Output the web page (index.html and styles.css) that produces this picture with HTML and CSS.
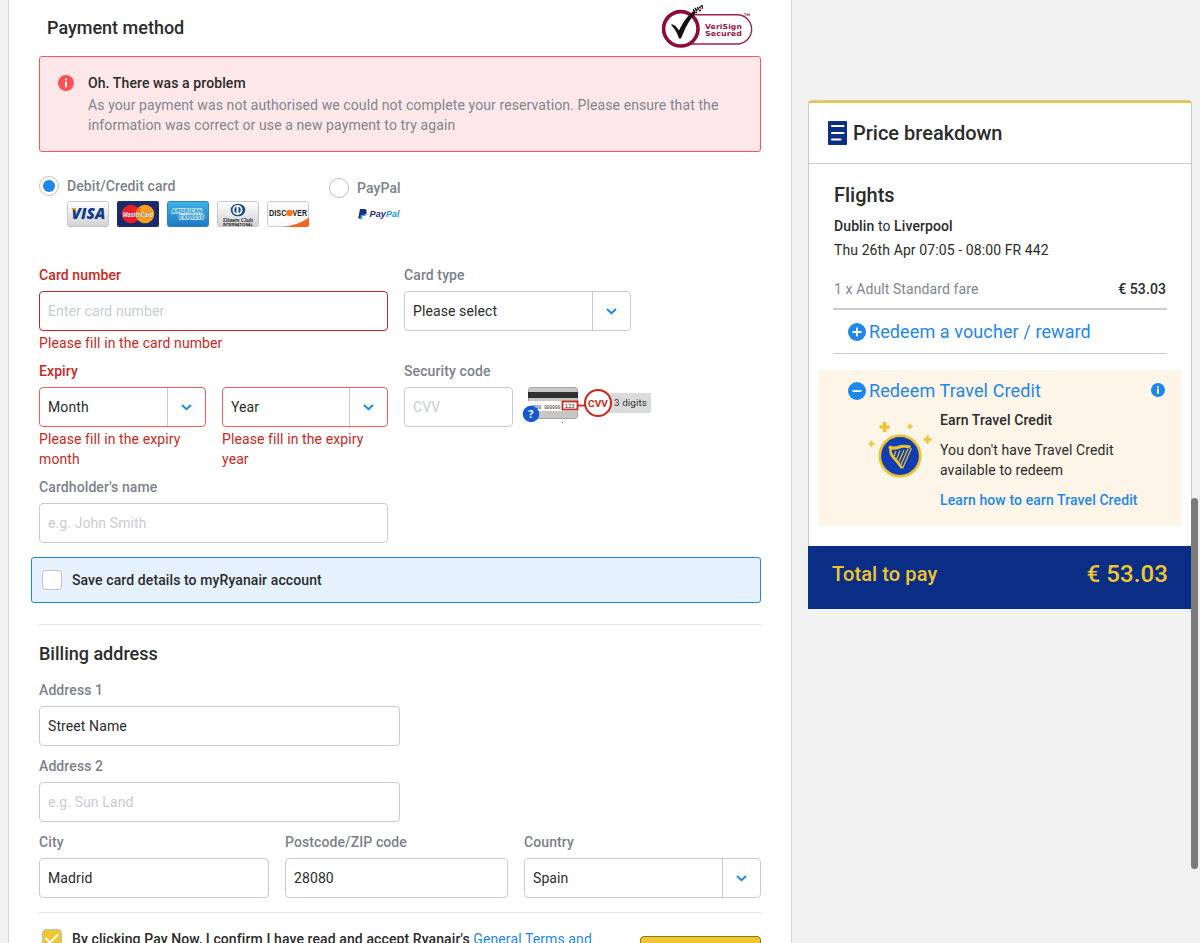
FILE: index.html
```html
<!DOCTYPE html>
<html lang="en">
<head>
<meta charset="utf-8">
<title>Payment</title>
<link rel="stylesheet" href="styles.css">
</head>
<body>
<div class="page">
<main class="panel">
  <header class="panel-head">
    <h2>Payment method</h2>
    <svg class="verisign" width="92" height="44" viewBox="0 0 92 44">
      <path d="M30 10.7H76a14.3 14.3 0 0 1 0 29.3H30" fill="#fff" stroke="#a02048" stroke-width="1.4"/>
      <circle cx="19.8" cy="24.8" r="17.2" fill="#fff" stroke="#8f0b37" stroke-width="3.6"/>
      <path d="M10.5 20c3 1 5.500 3 7.500 6.500C22 18 27 11 33.500 6.500l1.500 2C29 15 24 24 20 34.500h-2C16 28 13 24 10.500 21.500z" fill="#111"/>
      <path d="M32 5.500l2 2M34 4l2 3M36.500 3l1 3M38.500 2.500l1 2M41 1v2M35 9l1-1M38 7l2-1M42 3.500l-1 .5" stroke="#111" stroke-width="1.500"/>
      <path d="M39.500 2.500l1-1.500M40.500 5l1-1" stroke="#8f0b37"/>
      <g fill="#98123f" font-family="DejaVu Sans" font-weight="700" font-size="7">
        <text x="44" y="25" textLength="37" lengthAdjust="spacingAndGlyphs">VeriSign</text>
        <text x="44" y="32" textLength="37" lengthAdjust="spacingAndGlyphs">Secured</text>
        <text x="83" y="12" font-size="3.500">TM</text>
      </g>
    </svg>
  </header>

  <section class="alert">
    <svg width="16" height="16" viewBox="0 0 16 16"><circle cx="8" cy="8" r="8" fill="#ff5153"/><path d="M7 6.700h2v5.500H7zM7 3.500h2v2H7z" fill="#fff"/></svg>
    <div>
      <strong>Oh. There was a problem</strong>
      <p>As your payment was not authorised we could not complete your reservation. Please ensure that the information was correct or use a new payment to try again</p>
    </div>
  </section>

  <section class="methods">
    <div class="method method-card">
      <span class="radio radio-on"></span>
      <div>
        <b>Debit/Credit card</b>
        <div class="brands">
          <svg width="42" height="26" viewBox="0 0 42 26">
            <defs><linearGradient id="grey" x2="0" y2="1"><stop stop-color="#fff"/><stop offset="1" stop-color="#d2d2d4"/></linearGradient>
            <linearGradient id="sky" x2="0" y2="1"><stop stop-color="#3db2e6"/><stop offset="1" stop-color="#1e78c2"/></linearGradient></defs>
            <rect x=".5" y=".5" width="41" height="25" rx="2" fill="url(#grey)" stroke="#c8c8cb"/>
            <text x="4.500" y="18" font-family="Open Sans" font-weight="800" font-style="italic" font-size="15" fill="#123a8c" textLength="34" lengthAdjust="spacingAndGlyphs">VISA</text>
            <path d="M3.500 7h5l1.500 5C8.500 9.500 7 8 3.500 7z" fill="#f2a51c"/>
          </svg>
          <svg width="42" height="26" viewBox="0 0 42 26">
            <rect width="42" height="26" rx="2" fill="#1b2a68"/>
            <circle cx="14" cy="13" r="9.300" fill="#ee1c25"/><circle cx="28" cy="13" r="9.300" fill="#f9a11b"/>
            <path d="M19 8h5M18.500 10h5" stroke="#ee3a22" stroke-width=".8"/>
            <text x="6" y="16" font-family="Liberation Sans" font-weight="700" font-style="italic" font-size="6.800" fill="#fff" stroke="#41204b" stroke-width=".4" paint-order="stroke" textLength="30" lengthAdjust="spacingAndGlyphs">MasterCard</text>
          </svg>
          <svg width="42" height="26" viewBox="0 0 42 26">
            <rect x=".5" y=".5" width="41" height="25" rx="2" fill="url(#sky)" stroke="#2a84c0"/>
            <g font-family="DejaVu Sans" font-weight="700" font-size="5.500" fill="#2492d0" stroke="#d8f1fb" stroke-width="1.400" paint-order="stroke">
              <text x="5" y="12" textLength="30" lengthAdjust="spacingAndGlyphs">AMERICAN</text>
              <text x="12" y="18" textLength="25" lengthAdjust="spacingAndGlyphs">EXPRESS</text></g>
          </svg>
          <svg width="42" height="26" viewBox="0 0 42 26">
            <rect x=".5" y=".5" width="41" height="25" rx="2" fill="url(#grey)" stroke="#c8c8cb"/>
            <ellipse cx="21" cy="9" rx="7.300" ry="6.300" fill="#164a90"/><circle cx="20.500" cy="9" r="5" fill="#fff"/>
            <path d="M19.500 5.500a3.800 3.800 0 0 0 0 7zM21.500 5.500a3.800 3.800 0 0 1 0 7z" fill="#164a90"/>
            <text x="6" y="20.500" font-family="Liberation Serif" font-size="7" fill="#222" stroke="#222" stroke-width=".2" textLength="30" lengthAdjust="spacingAndGlyphs">Diners Club</text>
            <text x="6" y="24.500" font-family="Liberation Sans" font-weight="700" font-size="3.700" fill="#111" textLength="30" lengthAdjust="spacingAndGlyphs">INTERNATIONAL</text>
          </svg>
          <svg width="42" height="26" viewBox="0 0 42 26">
            <rect x=".5" y=".5" width="41" height="25" rx="2" fill="#fafafa" stroke="#ccc"/>
            <path d="M17 26C28 24 36 21 42 16.500V24a2 2 0 0 1-2 2z" fill="#f26522"/>
            <circle cx="22.500" cy="12" r="3.300" fill="#f47721"/>
            <g font-family="Liberation Sans" font-weight="700" font-size="9" fill="#1c1c1c">
              <text x="2" y="15.200" textLength="17.500" lengthAdjust="spacingAndGlyphs">DISC</text>
              <text x="25.500" y="15.200" textLength="14.500" lengthAdjust="spacingAndGlyphs">VER</text></g>
          </svg>
        </div>
      </div>
    </div>
    <div class="method method-paypal">
      <span class="radio"></span>
      <div>
        <b>PayPal</b>
        <svg class="paypal" width="44" height="14" viewBox="0 0 44 14">
          <path d="M3 2h4.500q2.500.4 2 3-.6 3-3.500 3H4.700L4 11.500H1.200z" fill="#1b2f7c"/>
          <path d="M9.600 4q.7.800.3 2.200Q9.200 9 6.500 9H5.400L5 12H3l.5-3.500L6 8.300Q9 8 9.600 4z" fill="#1c9bdc"/>
          <g font-family="Liberation Sans" font-weight="700" font-style="italic" font-size="9.500">
            <text x="12.500" y="10" fill="#1f2f7a" textLength="16.500" lengthAdjust="spacingAndGlyphs">Pay</text>
            <text x="29" y="10" fill="#1c9bdc" textLength="13.500" lengthAdjust="spacingAndGlyphs">Pal</text></g>
        </svg>
      </div>
    </div>
  </section>

  <section class="card-form">
    <div class="row card-row">
      <div class="field w349 bad">
        <label>Card number</label>
        <div class="input ghost dark">Enter card number</div>
        <p>Please fill in the card number</p>
      </div>
      <div class="field w227">
        <label>Card type</label>
        <div class="input select">Please select<i><svg width="11" height="7" viewBox="0 0 11 7"><path d="M1 1l4.500 4.200L10 1"/></svg></i></div>
      </div>
    </div>
    <div class="row expiry-row">
      <div class="field bad w349">
        <label>Expiry</label>
        <div class="row">
          <div class="w167"><div class="input select">Month<i><svg width="11" height="7" viewBox="0 0 11 7"><path d="M1 1l4.500 4.200L10 1"/></svg></i></div><p>Please fill in the expiry month</p></div>
          <div class="w166"><div class="input select">Year<i><svg width="11" height="7" viewBox="0 0 11 7"><path d="M1 1l4.500 4.200L10 1"/></svg></i></div><p>Please fill in the expiry year</p></div>
        </div>
      </div>
      <div class="field">
        <label>Security code</label>
        <div class="cvv-row">
          <div class="input ghost w109">CVV</div>
          <svg width="132" height="40" viewBox="0 0 132 40">
            <rect x="70" y="6" width="60" height="20" rx="1.500" fill="#d9dada"/>
            <rect x="7.500" y=".5" width="49" height="31" rx="2.500" fill="#c9c7c5" stroke="#aaa7a4"/>
            <path d="M7 5h50v6H7z" fill="#302f2f"/><path d="M7 14h50v10H7z" fill="#fff"/>
            <text x="9.500" y="21.500" font-family="Liberation Mono" font-size="5" fill="#222" textLength="30" lengthAdjust="spacingAndGlyphs">4700 000000</text>
            <rect x="41.500" y="14.500" width="15" height="8" fill="#fff" stroke="#c9281d" stroke-width="1.800"/>
            <text x="44" y="20.600" font-family="Liberation Sans" font-size="5.500" fill="#222">123</text>
            <path d="M57 18.500h8" stroke="#c9281d" stroke-width="1.800"/>
            <circle cx="77" cy="16" r="13" fill="#fff" stroke="#c9281d" stroke-width="2"/>
            <text x="67" y="19.500" font-family="Roboto" font-weight="700" font-size="9.500" fill="#c9281d" textLength="20" lengthAdjust="spacingAndGlyphs">CVV</text>
            <circle cx="10" cy="27" r="8.300" fill="#1558cf"/>
            <text x="10" y="31" text-anchor="middle" font-family="Open Sans" font-weight="700" font-size="11" fill="#fff">?</text>
            <text x="93" y="19" font-family="Roboto" font-size="9.500" fill="#333" textLength="33" lengthAdjust="spacingAndGlyphs">3 digits</text>
            <path d="M41 35.500h1" stroke="#1488ea"/>
          </svg>
        </div>
      </div>
    </div>
    <div class="field w349">
      <label>Cardholder's name</label>
      <div class="input ghost">e.g. John Smith</div>
    </div>
  </section>

  <section class="save"><span class="check"></span><strong>Save card details to myRyanair account</strong></section>

  <section class="billing">
    <h2>Billing address</h2>
    <div class="field w361"><label>Address 1</label><div class="input">Street Name</div></div>
    <div class="field w361"><label>Address 2</label><div class="input ghost">e.g. Sun Land</div></div>
    <div class="row">
      <div class="field w230"><label>City</label><div class="input">Madrid</div></div>
      <div class="field w223"><label>Postcode/ZIP code</label><div class="input">28080</div></div>
      <div class="field w237"><label>Country</label><div class="input select">Spain<i><svg width="11" height="7" viewBox="0 0 11 7"><path d="M1 1l4.500 4.200L10 1"/></svg></i></div></div>
    </div>
  </section>

  <footer class="terms">
    <span class="check check-on"><svg width="18" height="18" viewBox="0 0 18 18"><path d="M2.500 8l4.500 4.500L15 4.500" fill="none" stroke="#fff" stroke-width="2"/></svg></span>
    <strong>By clicking Pay Now, I confirm I have read and accept Ryanair's <a>General Terms and</a></strong>
    <span class="pay"></span>
  </footer>
</main>

<aside class="summary">
  <header>
    <svg width="19" height="24" viewBox="0 0 19 24"><rect width="19" height="24" rx="1" fill="#0b2f86"/><path d="M4 5h11.500M4 12h11.500M4 18.500h8.500" stroke="#fff" stroke-width="2.200" stroke-linecap="round"/></svg>
    <h1>Price breakdown</h1>
  </header>
  <div class="flights">
    <h1>Flights</h1>
    <p class="route"><b>Dublin</b> to <b>Liverpool</b></p>
    <p class="when">Thu 26th Apr 07:05 - 08:00 FR 442</p>
    <div class="fare"><span>1 x Adult Standard fare</span><b>€ 53.03</b></div>
    <div class="redeem voucher">
      <svg width="18" height="18" viewBox="0 0 18 18"><circle cx="9" cy="9" r="9" fill="#1e87ea"/><path d="M4.500 9h9M9 4.500v9" stroke="#fff" stroke-width="1.800"/></svg>
      <span>Redeem a voucher / reward</span>
    </div>
  </div>
  <div class="credit">
    <div class="redeem">
      <svg width="18" height="18" viewBox="0 0 18 18"><circle cx="9" cy="9" r="9" fill="#1e87ea"/><path d="M4.500 9h9" stroke="#fff" stroke-width="1.800"/></svg>
      <span>Redeem Travel Credit</span>
      <svg class="info" width="14" height="14" viewBox="0 0 16 16"><circle cx="8" cy="8" r="8" fill="#1e87ea"/><path d="M6.900 6.700h2.200v5.800H6.900zM6.900 3.300h2.200v2.200H6.900z" fill="#fff"/></svg>
    </div>
    <div class="credit-body">
      <svg width="64" height="56" viewBox="0 0 64 56">
        <path d="M16.600 0v10M11.600 5h10" stroke="#f0c32e" stroke-width="3.400"/>
        <path d="M42 2v5M39.500 4.500h5M3.500 18.500v6.500M.5 21.700h6.300" stroke="#f0c32e" stroke-width="1.800"/>
        <path d="M59.500 13.500v8M55.500 17.500h8" stroke="#f0c32e" stroke-width="2.600"/>
        <circle cx="32" cy="34" r="20.200" fill="#103db1" stroke="#edc22d" stroke-width="2.600"/>
        <g fill="none" stroke="#edc22d">
          <path d="M22.500 26q5 .5 9-1t11 .2" stroke-width="3"/>
          <path d="M23 25q-1.800 6 2.500 10.500T34 46" stroke-width="2.600"/>
          <path d="M43.500 26L34.500 46.500M28 29l-2 5.500M32 28.500l-3.500 9M36 28l-5 11.500M40 27l-7 15.500" stroke-width="1.200"/>
        </g>
        <circle cx="22.500" cy="25.500" r="2" fill="#edc22d"/>
      </svg>
      <div>
        <b>Earn Travel Credit</b>
        <p>You don't have Travel Credit available to redeem</p>
        <b class="link">Learn how to earn Travel Credit</b>
      </div>
    </div>
  </div>
  <div class="total"><span>Total to pay</span><b>€ 53.03</b></div>
</aside>
</div>
<div class="scroll-thumb"></div>
</body>
</html>
```

FILE: styles.css
```css
* { box-sizing: border-box; }
html, body { margin: 0; height: 943px; overflow: hidden; }
body { background: #f1f1f1; color: #2b2b2b; font: 14px/20px Roboto, "Liberation Sans", sans-serif; letter-spacing: .1px; }
h1, h2, p { margin: 0; }
h2 { font-size: 18px; font-weight: 500; line-height: 24px; letter-spacing: 0; }
h1 { font-size: 20px; font-weight: 500; line-height: 28px; letter-spacing: 0; }
b, strong, label { font-weight: 500; }
svg { display: block; flex: none; }
.page { display: flex; align-items: flex-start; gap: 16px; height: 943px; padding-left: 8px; overflow: hidden; }
.panel { width: 784px; height: 960px; flex: none; padding: 0 30px; background: #fff; border: solid #d0d3d8; border-width: 0 1px; }

.panel-head { display: flex; justify-content: space-between; height: 56px; padding: 4px 8px 0; }
.panel-head h2 { padding-top: 12px; }

.alert { display: flex; gap: 14px; height: 96px; padding: 16px 20px 0 18px; background: #fde7e9; border: 1px solid #fa5458; border-radius: 3px; }
.alert > svg { margin-top: 2px; }
.alert p { margin-top: 2px; color: #80858e; }

.methods { display: flex; height: 113px; padding-top: 24px; color: #7c818a; }
.method { display: flex; gap: 8px; }
.method-card { width: 290px; }
.method-paypal { padding-top: 2px; }
.radio { width: 20px; height: 20px; border: 1px solid #bfc2c5; border-radius: 50%; background: #fff; }
.radio-on { padding: 3px; background: #1e87ea content-box; }
.method b { display: block; }
.brands { display: flex; gap: 8px; margin-top: 5px; }
.paypal { margin-top: 9px; }

.row { display: flex; gap: 16px; }
.w349 { width: 349px; } .w361 { width: 361px; } .w227 { width: 227px; }
.w167 { width: 167px; } .w166 { width: 166px; } .w109 { width: 109px; }
.w230 { width: 230px; } .w223 { width: 223px; } .w237 { width: 237px; }
.field label { display: block; height: 26px; color: #7c818a; }
.field p { margin-top: 2px; color: #c8281e; }
.field.bad label { color: #c8281e; }
.input { height: 40px; padding: 9px 8px; background: #fff; border: 1px solid #c9cbd0; border-radius: 4px; }
.ghost { color: #c9ccd2; }
.select { display: flex; justify-content: space-between; padding: 0 0 0 8px; line-height: 38px; }
.select i { display: flex; align-items: center; justify-content: center; width: 38px; border-left: 1px solid #c9cbd0; }
.select path { fill: none; stroke: #1e87ea; stroke-width: 2; }
.bad .input { border-color: #f65a5c; }
.bad .input.dark { border-color: #b5282d; }
.card-row { height: 96px; }
.expiry-row { height: 116px; }
.cvv-row { display: flex; gap: 8px; }

.save { display: flex; align-items: center; gap: 10px; height: 46px; margin: 14px 0 21px -8px; padding-left: 10px; background: #e5f1fd; border: 1px solid #1e87d8; border-radius: 3px; }
.check { width: 20px; height: 20px; flex: none; background: #fff; border: 1px solid #bfc2c5; border-radius: 4px; }
.check-on { background: #f1c52e; }

.billing { border-top: 1px solid #e6e7e9; padding-top: 17px; }
.billing h2 { height: 38px; }
.billing > .field { margin-bottom: 10px; }
.billing .w223 { margin-right: 0; }

.terms { display: flex; margin-top: 14px; padding: 16px 0 0 3px; border-top: 1px solid #e6e7e9; }
.terms strong { width: 588px; margin-left: 10px; flex: none; }
.terms a { color: #1e87ea; font-weight: 400; }
.pay { width: 121px; height: 40px; margin: 7px 0 0 -20px; flex: none; background: #f1c52e; border: 1px solid #8c7420; border-radius: 4px; }

.summary { width: 384px; margin-top: 100px; flex: none; background: #fff; border: 1px solid #c9cbd0; border-radius: 4px; border-bottom: 0; }
.summary header { display: flex; align-items: center; gap: 6px; height: 63px; padding: 0 19px; border-top: 2px solid #f1c52e; border-bottom: 1px solid #c9cbd0; }
.flights { padding: 17px 24px 0; }
.flights > h1, .flights > p { padding-left: 1px; }
.route { margin-top: 7px; }
.when { margin-top: 4px; }
.fare { display: flex; justify-content: space-between; height: 50px; padding: 19px 1px 0; border-bottom: 2px solid #c9cbd0; }
.fare span { color: #80858e; }
.redeem { display: flex; align-items: center; gap: 3px; font-size: 18px; color: #1e87ea; }
.voucher { height: 44px; padding-left: 15px; border-bottom: 1px solid #c9cbd0; }
.credit { height: 156px; margin: 16px 9px 20px; padding: 8px 0 0 30px; background: #fcf5e8; }
.redeem .info { margin: 0 17px 2px auto; }
.credit .redeem { height: 26px; }
.credit-body { display: flex; gap: 8px; padding: 6px 10px 0 20px; }
.credit-body > svg { margin-top: 12px; }
.credit-body > div { margin-top: 0; }
.credit-body b { display: block; }
.credit-body p { margin: 10px 0; }
.credit-body .link { color: #1e87ea; }
.total { display: flex; justify-content: space-between; height: 63px; margin: 0 -1px; padding: 14px 24px 0; background: #0a2e85; color: #f1c52e; font-size: 20px; font-weight: 500; line-height: 28px; }
.total b { font-size: 24px; }
.scroll-thumb { position: absolute; left: 1191px; top: 498px; width: 7px; height: 371px; border-radius: 4px; background: #7a7a7a; }
```
